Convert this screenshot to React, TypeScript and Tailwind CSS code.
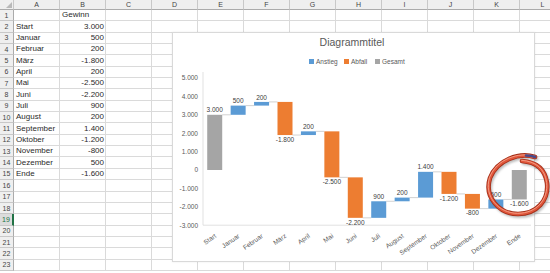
const FONT = "'Liberation Sans', Arial, sans-serif";

type Step = { label: string; value: number; kind: "up" | "down" | "total" };

const steps: Step[] = [
  { label: "Start", value: 3000, kind: "total" },
  { label: "Januar", value: 500, kind: "up" },
  { label: "Februar", value: 200, kind: "up" },
  { label: "März", value: -1800, kind: "down" },
  { label: "April", value: 200, kind: "up" },
  { label: "Mai", value: -2500, kind: "down" },
  { label: "Juni", value: -2200, kind: "down" },
  { label: "Juli", value: 900, kind: "up" },
  { label: "August", value: 200, kind: "up" },
  { label: "September", value: 1400, kind: "up" },
  { label: "Oktober", value: -1200, kind: "down" },
  { label: "November", value: -800, kind: "down" },
  { label: "Dezember", value: 500, kind: "up" },
  { label: "Ende", value: -1600, kind: "total" },
];

const fmt = (v: number) =>
  (v < 0 ? "-" : "") + String(Math.abs(v)).replace(/\B(?=(\d{3})+(?!\d))/g, ".");

const colors = { up: "#5b9bd5", down: "#ed7d31", total: "#a5a5a5" };

const columns = ["A", "B", "C", "D", "E", "F", "G", "H", "I", "J", "K", "L"];
const rowCount = 23;

function Sheet() {
  return (
    <div className="flex flex-col text-[8px] text-[#2a2a2a]" style={{ fontFamily: FONT }}>
      <div className="flex h-[10px]">
        <div className="relative w-[14px] shrink-0 border-r border-b border-r-[#c8c8c8] border-b-[#ababab] bg-[#efefef]">
          <div className="absolute right-[1px] bottom-[1px] h-0 w-0 border-l-[6px] border-t-[6px] border-l-transparent border-t-transparent border-r-0 border-b-[6px] border-b-[#b9b9b9]" />
        </div>
        {columns.map((c) => (
          <div
            key={c}
            className="flex w-[46px] shrink-0 items-center justify-center border-r border-b border-r-[#c8c8c8] border-b-[#ababab] bg-[#efefef] text-[7px] leading-none text-[#444]"
          >
            {c}
          </div>
        ))}
      </div>
      {Array.from({ length: rowCount }, (_, i) => {
        const r = i + 1;
        const step = r >= 2 && r <= 15 ? steps[r - 2] : null;
        const selected = r === 19;
        return (
          <div key={r} className="flex h-[11.35px]">
            <div
              className={
                selected
                  ? "flex w-[14px] shrink-0 items-center justify-center border-r-2 border-b border-r-[#217346] border-b-[#c8c8c8] bg-[#dcdcdc] text-[7px] leading-none text-[#217346]"
                  : "flex w-[14px] shrink-0 items-center justify-center border-r border-b border-r-[#ababab] border-b-[#c8c8c8] bg-[#efefef] text-[7px] leading-none text-[#444]"
              }
            >
              {r}
            </div>
            {columns.map((c) => {
              let content: string = "";
              let align = "justify-start pl-[2px]";
              if (c === "A" && step) content = step.label;
              if (c === "B" && r === 1) content = "Gewinn";
              if (c === "B" && step) {
                content = fmt(step.value);
                align = "justify-end pr-[1px]";
              }
              return (
                <div
                  key={c}
                  className={`flex w-[46px] shrink-0 items-center overflow-hidden whitespace-nowrap border-r border-b border-[#dadada] leading-none ${align}`}
                >
                  {content}
                </div>
              );
            })}
          </div>
        );
      })}
    </div>
  );
}

function WaterfallChart() {
  const x0 = 31;
  const cw = 328 / 14;
  const bw = 15;
  const k = 0.0184;
  const y = (v: number) => 138 - v * k;

  let running = 0;
  const bars = steps.map((s, i) => {
    let from: number;
    let to: number;
    if (s.kind === "total") {
      from = 0;
      to = s.value;
      running = s.value;
    } else {
      from = running;
      to = running + s.value;
      running = to;
    }
    const cx = x0 + cw * (i + 0.5);
    return { ...s, from, to, cx, end: running };
  });

  const ticks = [5000, 4000, 3000, 2000, 1000, 0, -1000, -2000, -3000];

  return (
    <svg width={361} height={228} viewBox="1 1 361 228" style={{ fontFamily: FONT }}>
      <text x={180} y={14} textAnchor="middle" fontSize={10.5} fill="#595959">
        Diagrammtitel
      </text>

      <rect x={137} y={27} width={5} height={5} fill={colors.up} />
      <text x={144} y={32} fontSize={6.5} fill="#595959">Anstieg</text>
      <rect x={172} y={27} width={5} height={5} fill={colors.down} />
      <text x={179} y={32} fontSize={6.5} fill="#595959">Abfall</text>
      <rect x={203} y={27} width={5} height={5} fill={colors.total} />
      <text x={210} y={32} fontSize={6.5} fill="#595959">Gesamt</text>

      {ticks.map((t) => (
        <text key={t} x={26} y={y(t) + 2.3} textAnchor="end" fontSize={6.5} fill="#595959">
          {fmt(t)}
        </text>
      ))}

      <line x1={x0} y1={40} x2={x0} y2={y(-3000)} stroke="#d9d9d9" strokeWidth={0.8} />
      <line x1={x0} y1={y(-3000)} x2={359} y2={y(-3000)} stroke="#d9d9d9" strokeWidth={0.8} />

      {bars.map((b, i) => {
        const next = bars[i + 1];
        if (!next) return null;
        return (
          <line
            key={`c${i}`}
            x1={b.cx + bw / 2}
            x2={next.cx - bw / 2}
            y1={y(b.end)}
            y2={y(b.end)}
            stroke="#bfbfbf"
            strokeWidth={0.7}
          />
        );
      })}

      {bars.map((b) => {
        const top = y(Math.max(b.from, b.to));
        const bottom = y(Math.min(b.from, b.to));
        const positive = b.value >= 0;
        return (
          <g key={b.label}>
            <rect x={b.cx - bw / 2} y={top} width={bw} height={Math.max(bottom - top, 1)} fill={colors[b.kind]} />
            <text
              x={b.cx}
              y={positive ? top - 2.4 : bottom + 6.8}
              textAnchor="middle"
              fontSize={6.5}
              fill="#404040"
            >
              {fmt(b.value)}
            </text>
            <text
              transform={`translate(${b.cx + 2} 205) rotate(-35)`}
              textAnchor="end"
              fontSize={6.5}
              fill="#595959"
            >
              {b.label}
            </text>
          </g>
        );
      })}
    </svg>
  );
}

function Annotation() {
  const d =
    "M 535 157 C 519 152 497 160 490 178 C 484 197 499 214 518 214 C 537 214 549 200 547 183 C 545 169 536 162 522 161";
  return (
    <svg className="pointer-events-none absolute top-0 left-0" width={550} height={273}>
      <defs>
        <filter id="soft" x="-20%" y="-20%" width="140%" height="140%">
          <feGaussianBlur stdDeviation="1.3" />
        </filter>
      </defs>
      <path d={d} transform="translate(1.5 2)" fill="none" stroke="#6f6f6f" strokeWidth={4} opacity={0.45} filter="url(#soft)" strokeLinecap="round" />
      <path d={d} fill="none" stroke="#a3301a" strokeWidth={4.6} strokeLinecap="round" />
      <path d={d} fill="none" stroke="#e0553a" strokeWidth={2.9} strokeLinecap="round" />
      <path d={d} transform="translate(-0.4 -0.7)" fill="none" stroke="#f7ad96" strokeWidth={0.8} strokeLinecap="round" />
      <path d="M 535 157 C 532 155.5 529 155.5 526 155.5" fill="none" stroke="#474b8c" strokeWidth={2.6} strokeLinecap="round" />
    </svg>
  );
}

export default function App() {
  return (
    <div className="relative h-[273px] w-[550px] overflow-hidden bg-white">
      <Sheet />
      <div className="absolute top-[32px] left-[172px] h-[230px] w-[363px] border border-[#d9d9d9] bg-white shadow-[0_0_2px_rgba(0,0,0,0.08)]">
        <WaterfallChart />
      </div>
      <Annotation />
    </div>
  );
}
